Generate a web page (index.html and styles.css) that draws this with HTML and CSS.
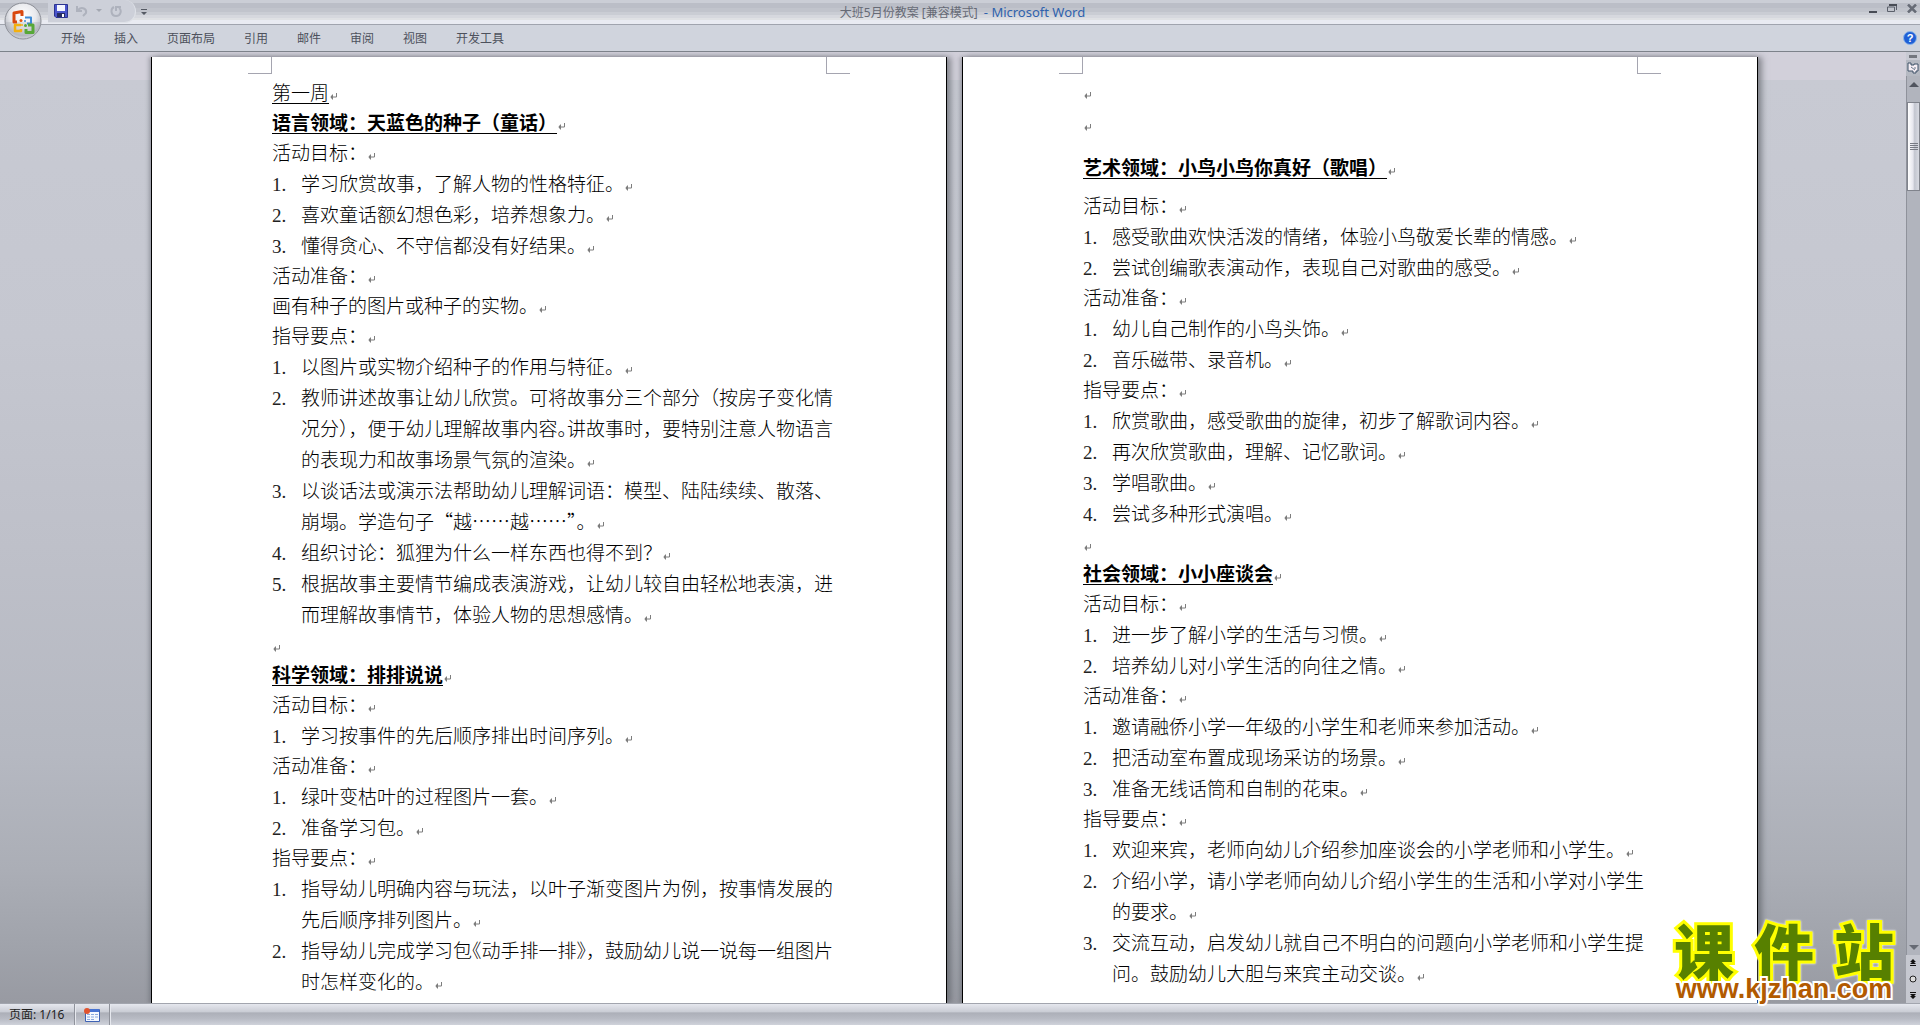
FILE: index.html
```html
<!DOCTYPE html>
<html lang="zh-CN">
<head>
<meta charset="utf-8">
<title>大班5月份教案 [兼容模式] - Microsoft Word</title>
<link rel="stylesheet" href="styles.css">
</head>
<body>
<svg class="defs" aria-hidden="true">
  <symbol id="pm" viewBox="0 0 8 7"><path d="M7.500 0v4H1.500M3.500 1.500v5M2.500 2.500v3" fill="none" stroke="#7d7d7d"/></symbol>
  <radialGradient id="orb" cx="50%" cy="35%" r="65%"><stop offset="0" stop-color="#fff"/><stop offset=".55" stop-color="#e8e9ed"/><stop offset=".85" stop-color="#bcbfc7"/><stop offset="1" stop-color="#e8e9ed"/></radialGradient>
</svg>
<div class="app">
  <header class="titlebar">
    <button class="office" aria-label="Office">
      <svg width="38" height="38" viewBox="0 0 38 38"><circle cx="19" cy="19" r="18" fill="url(#orb)" stroke="#8b8e96"/><path d="M2 20h34a17 17 0 0 1-34 0z" fill="#9da0aa" opacity=".25"/><g fill="none" stroke-linejoin="round"><path d="M18 14V9.500L10 11v9h3" stroke="#d9480f" stroke-width="3"/><path d="M21 15.500h6v6h-4" stroke="#3c8ad6" stroke-width="2"/><path d="M17 23h-6v6h6v-2" stroke="#f3b010" stroke-width="2.500"/><path d="M24 23h5v7.500h-7V27" stroke="#57a838" stroke-width="3"/></g><circle cx="17" cy="18.500" r="1.500" fill="#e2570f"/><circle cx="21" cy="19" r="1" fill="#3c8ad6"/><circle cx="18" cy="23" r="1" fill="#f3b010"/><circle cx="21.500" cy="23.500" r="1.500" fill="#57a838"/></svg>
    </button>
    <div class="quick">
      <button aria-label="保存"><svg width="14" height="14" viewBox="0 0 14 14"><path d="M.5.500h13v13H2l-1.500-1.500z" fill="#4a55cc" stroke="#2c348f"/><path d="M3 1h8v6H3z" fill="#f4f6ff"/><path d="M3 9h8v4H3z" fill="#272d62"/><path d="M8 10h2v3H8z" fill="#fff"/></svg></button>
      <button aria-label="撤消"><svg width="12" height="12" viewBox="0 0 12 12"><path d="M1 1v5h5M2 5c4-4 9-1 8 3l-3 3" fill="none" stroke="#aeb2bd" stroke-width="2"/></svg></button>
      <button aria-label="撤消列表"><svg width="6" height="4" viewBox="0 0 6 4"><path d="M0 0h6L3 3z" fill="#a4a8b2"/></svg></button>
      <button aria-label="重复"><svg width="12" height="12" viewBox="0 0 12 12"><path d="M4 2C0 4 1 11 6 11s6-6 3-8M6 1v5M6 2h5" fill="none" stroke="#aeb2bd" stroke-width="2"/></svg></button>
    </div>
    <button class="more" aria-label="自定义"><svg width="6" height="6" viewBox="0 0 6 6"><path d="M0 0h6v1H0zM0 3h6L3 6z" fill="#555a64"/></svg></button>
    <h1 class="caption">大班5月份教案 [兼容模式] <span class="product">- Microsoft Word</span></h1>
    <div class="winbtns">
      <button aria-label="最小化"><svg width="8" height="10" viewBox="0 0 8 10"><path d="M0 8h8v2H0z" fill="#484c55"/></svg></button>
      <button aria-label="还原"><svg width="10" height="8" viewBox="0 0 10 8"><path d="M2 .500h7.500V6M.5 3h7v4.500h-7z" fill="none" stroke="#5b606b"/><path d="M2 0h8v2H2z" fill="#484c55"/></svg></button>
      <button aria-label="关闭"><svg width="10" height="9" viewBox="0 0 10 9"><path d="M1 .500l8 8M9 .500l-8 8" stroke="#666b76" stroke-width="2.500"/></svg></button>
    </div>
  </header>
  <nav class="ribbon">
    <a href="#">开始</a><a href="#">插入</a><a href="#">页面布局</a><a href="#">引用</a><a href="#">邮件</a><a href="#">审阅</a><a href="#">视图</a><a href="#">开发工具</a>
    <button class="help" aria-label="帮助">?</button>
  </nav>
  <div class="workspace">
    <main class="desk">
      <article class="paper first">
        <i class="crop left"></i><i class="crop right"></i>
        <p><u>第一周</u><svg class="pm"><use href="#pm"/></svg></p>
        <h2><u>语言领域：天蓝色的种子（童话）</u><svg class="pm"><use href="#pm"/></svg></h2>
        <p>活动目标：<svg class="pm"><use href="#pm"/></svg></p>
        <div class="item"><span class="num">1.</span><span>学习欣赏故事，了解人物的性格特征。<svg class="pm"><use href="#pm"/></svg></span></div>
        <div class="item"><span class="num">2.</span><span>喜欢童话额幻想色彩，培养想象力。<svg class="pm"><use href="#pm"/></svg></span></div>
        <div class="item"><span class="num">3.</span><span>懂得贪心、不守信都没有好结果。<svg class="pm"><use href="#pm"/></svg></span></div>
        <p>活动准备：<svg class="pm"><use href="#pm"/></svg></p>
        <p>画有种子的图片或种子的实物。<svg class="pm"><use href="#pm"/></svg></p>
        <p>指导要点：<svg class="pm"><use href="#pm"/></svg></p>
        <div class="item"><span class="num">1.</span><span>以图片或实物介绍种子的作用与特征。<svg class="pm"><use href="#pm"/></svg></span></div>
        <div class="item"><span class="num">2.</span><span>教师讲述故事让幼儿欣赏。可将故事分三个部分（按房子变化情<br>况分<span class="half">）</span>，便于幼儿理解故事内容<span class="half">。</span>讲故事时，要特别注意人物语言<br>的表现力和故事场景气氛的渲染。<svg class="pm"><use href="#pm"/></svg></span></div>
        <div class="item"><span class="num">3.</span><span>以谈话法或演示法帮助幼儿理解词语：模型、陆陆续续、散落、<br>崩塌。学造句子<span class="cjk">“越……越……<span class="half">”</span></span>。<svg class="pm"><use href="#pm"/></svg></span></div>
        <div class="item"><span class="num">4.</span><span>组织讨论：狐狸为什么一样东西也得不到？<svg class="pm"><use href="#pm"/></svg></span></div>
        <div class="item"><span class="num">5.</span><span>根据故事主要情节编成表演游戏，让幼儿较自由轻松地表演，进<br>而理解故事情节，体验人物的思想感情。<svg class="pm"><use href="#pm"/></svg></span></div>
        <p><svg class="pm"><use href="#pm"/></svg></p>
        <h2><u>科学领域：排排说说</u><svg class="pm"><use href="#pm"/></svg></h2>
        <p>活动目标：<svg class="pm"><use href="#pm"/></svg></p>
        <div class="item"><span class="num">1.</span><span>学习按事件的先后顺序排出时间序列。<svg class="pm"><use href="#pm"/></svg></span></div>
        <p>活动准备：<svg class="pm"><use href="#pm"/></svg></p>
        <div class="item"><span class="num">1.</span><span>绿叶变枯叶的过程图片一套。<svg class="pm"><use href="#pm"/></svg></span></div>
        <div class="item"><span class="num">2.</span><span>准备学习包。<svg class="pm"><use href="#pm"/></svg></span></div>
        <p>指导要点：<svg class="pm"><use href="#pm"/></svg></p>
        <div class="item"><span class="num">1.</span><span>指导幼儿明确内容与玩法，以叶子渐变图片为例，按事情发展的<br>先后顺序排列图片。<svg class="pm"><use href="#pm"/></svg></span></div>
        <div class="item"><span class="num">2.</span><span>指导幼儿完成学习包<span class="half">《</span>动手排一排<span class="half">》</span>，鼓励幼儿说一说每一组图片<br>时怎样变化的。<svg class="pm"><use href="#pm"/></svg></span></div>
      </article>
      <article class="paper">
        <i class="crop left"></i><i class="crop right"></i>
        <p class="tall"><svg class="pm"><use href="#pm"/></svg></p>
        <p class="tall"><svg class="pm"><use href="#pm"/></svg></p>
        <h2 class="spaced"><u>艺术领域：小鸟小鸟你真好（歌唱）</u><svg class="pm"><use href="#pm"/></svg></h2>
        <p>活动目标：<svg class="pm"><use href="#pm"/></svg></p>
        <div class="item"><span class="num">1.</span><span>感受歌曲欢快活泼的情绪，体验小鸟敬爱长辈的情感。<svg class="pm"><use href="#pm"/></svg></span></div>
        <div class="item"><span class="num">2.</span><span>尝试创编歌表演动作，表现自己对歌曲的感受。<svg class="pm"><use href="#pm"/></svg></span></div>
        <p>活动准备：<svg class="pm"><use href="#pm"/></svg></p>
        <div class="item"><span class="num">1.</span><span>幼儿自己制作的小鸟头饰。<svg class="pm"><use href="#pm"/></svg></span></div>
        <div class="item"><span class="num">2.</span><span>音乐磁带、录音机。<svg class="pm"><use href="#pm"/></svg></span></div>
        <p>指导要点：<svg class="pm"><use href="#pm"/></svg></p>
        <div class="item"><span class="num">1.</span><span>欣赏歌曲，感受歌曲的旋律，初步了解歌词内容。<svg class="pm"><use href="#pm"/></svg></span></div>
        <div class="item"><span class="num">2.</span><span>再次欣赏歌曲，理解、记忆歌词。<svg class="pm"><use href="#pm"/></svg></span></div>
        <div class="item"><span class="num">3.</span><span>学唱歌曲。<svg class="pm"><use href="#pm"/></svg></span></div>
        <div class="item"><span class="num">4.</span><span>尝试多种形式演唱。<svg class="pm"><use href="#pm"/></svg></span></div>
        <p><svg class="pm"><use href="#pm"/></svg></p>
        <h2><u>社会领域：小小座谈会</u><svg class="pm"><use href="#pm"/></svg></h2>
        <p>活动目标：<svg class="pm"><use href="#pm"/></svg></p>
        <div class="item"><span class="num">1.</span><span>进一步了解小学的生活与习惯。<svg class="pm"><use href="#pm"/></svg></span></div>
        <div class="item"><span class="num">2.</span><span>培养幼儿对小学生活的向往之情。<svg class="pm"><use href="#pm"/></svg></span></div>
        <p>活动准备：<svg class="pm"><use href="#pm"/></svg></p>
        <div class="item"><span class="num">1.</span><span>邀请融侨小学一年级的小学生和老师来参加活动。<svg class="pm"><use href="#pm"/></svg></span></div>
        <div class="item"><span class="num">2.</span><span>把活动室布置成现场采访的场景。<svg class="pm"><use href="#pm"/></svg></span></div>
        <div class="item"><span class="num">3.</span><span>准备无线话筒和自制的花束。<svg class="pm"><use href="#pm"/></svg></span></div>
        <p>指导要点：<svg class="pm"><use href="#pm"/></svg></p>
        <div class="item"><span class="num">1.</span><span>欢迎来宾，老师向幼儿介绍参加座谈会的小学老师和小学生。<svg class="pm"><use href="#pm"/></svg></span></div>
        <div class="item"><span class="num">2.</span><span>介绍小学，请小学老师向幼儿介绍小学生的生活和小学对小学生<br>的要求。<svg class="pm"><use href="#pm"/></svg></span></div>
        <div class="item"><span class="num">3.</span><span>交流互动，启发幼儿就自己不明白的问题向小学老师和小学生提<br>问。鼓励幼儿大胆与来宾主动交谈。<svg class="pm"><use href="#pm"/></svg></span></div>
      </article>
    </main>
    <aside class="scroll">
      <i class="split"></i>
      <button class="ruler" aria-label="标尺"><svg width="12" height="12" viewBox="0 0 12 12"><path d="M1 3V1h3v2h3V2h4v7H9v2H6V9H1z" fill="#f5eef4" stroke="#3f5368"/><path d="M4 5l4 3M8 5v2" stroke="#6b7a8c"/></svg></button>
      <div class="track">
        <button aria-label="向上"><svg width="10" height="5" viewBox="0 0 10 5"><path d="M5 0l5 5H0z" fill="#50545e"/></svg></button>
        <div class="thumb"><i></i><i></i><i></i><i></i></div>
        <button class="down" aria-label="向下"><svg width="10" height="5" viewBox="0 0 10 5"><path d="M0 0h10L5 5z" fill="#666a74"/></svg></button>
      </div>
      <div class="browse">
        <button aria-label="前一页"><svg width="6" height="7" viewBox="0 0 6 7"><path d="M3 0l3 3H0zM3 2l3 3H0zM0 6h6v1H0z" fill="#111"/></svg></button>
        <button aria-label="选择浏览对象"><svg width="8" height="8" viewBox="0 0 8 8"><circle cx="4" cy="4" r="3" fill="#ddd" stroke="#222"/></svg></button>
        <button aria-label="下一页"><svg width="6" height="7" viewBox="0 0 6 7"><path d="M0 0h6v1H0zM0 2h6L3 5zM0 4h6L3 7z" fill="#111"/></svg></button>
      </div>
    </aside>
    <div class="watermark"><strong><b>课</b><b>件</b><b>站</b></strong><span>www.kjzhan.com</span></div>
  </div>
  <footer class="status">
    <span class="cell pages">页面: 1/16</span>
    <button class="cell" aria-label="宏"><svg width="16" height="14" viewBox="0 0 16 14"><path d="M1.500 1.500h14v12h-14z" fill="#f4f8ff" stroke="#3e62b4"/><path d="M2 1h13v3H2z" fill="#4672d2"/><path d="M3 6.500h11M3 9h11M3 11.500h8" stroke="#8aa9de" stroke-dasharray="3 1"/><circle cx="3" cy="3" r="3" fill="#e0532e"/></svg></button>
  </footer>
</div>
</body>
</html>
```
FILE: styles.css
```css
* { box-sizing: border-box; }
body { margin: 0; font-family: "Liberation Serif", "Noto Sans CJK SC", sans-serif; }
button { border: 0; padding: 0; margin: 0; background: none; font: inherit; display: flex; align-items: center; justify-content: center; }
svg { display: block; flex: none; }
.defs { position: absolute; width: 0; height: 0; }
.app { height: 100vh; display: flex; flex-direction: column; overflow: hidden; background: #b0b3bb; }

.titlebar {
  position: relative; z-index: 2; flex: none; height: 25px; display: flex; align-items: flex-start;
  border-bottom: 1px solid #a0a4ae;
  background: linear-gradient(#cbced6 0 3px, #bbbec7 3px 8px, #c1c4cc 8px 12px, #cacdd4 12px 15px, #d6d8de 15px 18px, #dfe1e4 18px 20px, #e9ebf2 20px);
}
.office { position: absolute; left: 4px; top: 2px; }
.quick {
  margin-left: 48px; width: 88px; height: 23px; padding: 0 0 0 6px; display: flex; align-items: center; gap: 8px;
  background: #cdd0d9; border: 1px solid #dfe2e8; border-width: 0 1px 1px 0; border-radius: 0 12px 12px 0;
}
.more { margin: 9px 0 0 5px; }
.caption {
  flex: 1; margin: 0; padding-right: 92px; text-align: center; font: 12px/25px "Noto Sans", "Noto Sans CJK SC", sans-serif; color: #666a75;
}
.product { margin-left: 3px; color: #2f62ad; font-size: 13px; }
.winbtns { display: flex; gap: 10px; padding: 3px 3px 0 0; width: 50px; justify-content: flex-end; }

.ribbon {
  flex: none; height: 27px; padding: 0 3px 0 61px; display: flex; align-items: center; gap: 29px;
  background: #d0d4dd; border-bottom: 1px solid #7d828a;
}
.ribbon a { font: 12px/26px "Noto Sans CJK SC", sans-serif; color: #4d515c; text-decoration: none; }
.help {
  margin-left: auto; width: 14px; height: 14px; border-radius: 50%; border: 1px solid #8ab4ea; background: #1f5fd6; color: #fff;
  font: bold 11px/12px "Liberation Sans", sans-serif;
}

.workspace { position: relative; flex: 1; min-height: 0; display: flex; }
.desk {
  flex: 1; min-width: 0; overflow: hidden; display: flex; justify-content: center; align-items: stretch; gap: 15px;
  padding: 5px 0 0 3px;
  background: linear-gradient(#d2d0da 0 28px, #c8cad3 28px, #c5c7d0 30%, #bec0c9 52%, #b5b8c1 74%, #abaeb6 86%, #a0a3ab 94%, #989aa2);
}
.paper {
  position: relative; flex: none; width: 796px; padding: 20px 118px 0 120px; background: #fff;
  border: solid #000; border-width: 0 1px; box-shadow: 4px 0 6px #55585f99, -2px 0 4px #55585f66;
  font-size: 19px; color: #000; white-space: nowrap; font-weight: 300;
}
.first { padding-top: 22px; }
.crop { position: absolute; top: 0; width: 24px; height: 17px; border-bottom: 1px solid #a5a5b0; }
.crop.left { left: 96px; border-right: 1px solid #a5a5b0; }
.crop.right { right: 96px; border-left: 1px solid #a5a5b0; }
.paper p { margin: 0; height: 30px; line-height: 30px; }
.paper h2 { margin: 0; height: 30px; font-size: 19px; line-height: 30px; font-weight: 700; }
.paper .tall { height: 32px; line-height: 32px; }
.paper .spaced { margin: 13px 0 8px; }
.item { display: flex; line-height: 31px; }
.num { flex: none; width: 29px; color: #222; }
.cjk { font-family: "Noto Sans CJK SC", sans-serif; line-height: 1; }
.half { font-feature-settings: "halt"; }
.paper u { text-underline-offset: 3px; text-decoration-thickness: 1px; }
.pm { display: inline-block; width: 8px; height: 7px; }

.scroll { flex: none; width: 14px; display: flex; flex-direction: column; background: #c8cad3; }
.split { align-self: center; width: 8px; height: 3px; margin: 3px 0 2px; background: #74777f; }
.ruler { height: 16px; background: #b5b9c2; }
.track { flex: 1; display: flex; flex-direction: column; background: #b1b4bd; border-left: 1px solid #8f929b; }
.track button { height: 16px; flex: none; }
.thumb {
  height: 89px; margin-top: 10px; display: flex; flex-direction: column; align-items: center; justify-content: center; gap: 1px;
  border: 1px solid #80838c; background: linear-gradient(90deg, #fff, #e6e6ee 45%, #c3c6d0 60%, #d8dae2);
}
.thumb i { width: 8px; height: 1px; background: #777a84; }
.track .down { margin-top: auto; }
.browse { height: 48px; display: flex; flex-direction: column; justify-content: space-around; align-items: center; background: #c6c8d0; }

.watermark {
  position: absolute; right: 22px; bottom: 2px; width: 228px; display: flex; flex-direction: column; align-items: center;
  white-space: nowrap;
}
.watermark strong {
  align-self: stretch; display: flex; justify-content: space-between; padding: 0 4px;
  font: 900 60px/56px "Noto Sans CJK SC", sans-serif; color: #578000; -webkit-text-stroke: 6px #ff0; paint-order: stroke fill;
  filter: drop-shadow(0 0 1px #fff);
}
.watermark b { font-weight: inherit; }
.watermark span {
  position: relative; z-index: 1;
  font: bold 27px/24px "Liberation Sans", sans-serif; color: #b25a00; -webkit-text-stroke: 4px #fff; paint-order: stroke fill;
}

.status {
  flex: none; height: 22px; display: flex; border-top: 1px solid #a2a5ae; color: #222;
  font: 12px/21px "Noto Sans", "Noto Sans CJK SC", sans-serif;
  background: linear-gradient(#e5e7ee, #c9ccd4 38%, #acafb8 42%, #b8bbc4 70%, #cfd2da);
}
.cell { padding: 0 9px; border-right: 1px solid #8f929b; box-shadow: 1px 0 #e6e8ee; }
.pages { min-width: 75px; }
```
